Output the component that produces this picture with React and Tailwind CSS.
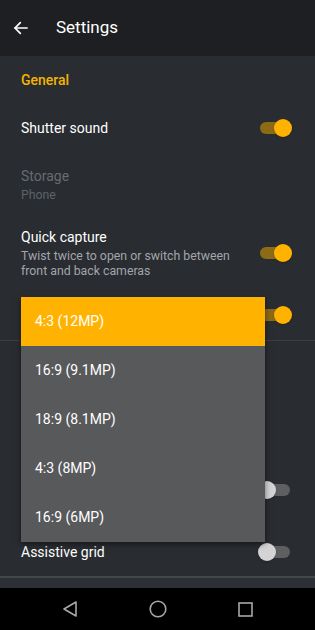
import { useState } from "react"

const font = { fontFamily: "Roboto, 'Liberation Sans', sans-serif" }

function Toggle({ on }) {
  return (
    <div className="relative w-[34px] h-[18px] flex items-center">
      <div className={`ml-[2px] w-[30px] h-[12px] rounded-full ${on ? "bg-[#8c6b16]" : "bg-[#5d5f61]"}`} />
      <div
        className={`absolute top-0 w-[18px] h-[18px] rounded-full shadow ${
          on ? "right-0 bg-[#ffb300]" : "left-0 bg-[#d4d4d4]"
        }`}
      />
    </div>
  )
}

// covered rows sit under the open menu, their labels are not drawn
function Row({ title, subtitle, toggle, disabled, covered, className = "" }) {
  return (
    <div className={`flex items-center justify-between pl-[21px] pr-[23px] ${className}`}>
      <div className={`flex flex-col ${covered ? "invisible" : ""}`}>
        <span className={`text-[14px] leading-[20px] ${disabled ? "text-[#686b70]" : "text-white"}`}>{title}</span>
        {subtitle && (
          <span className={`text-[12.3px] leading-[15px] mt-[2px] ${disabled ? "text-[#5f6267]" : "text-[#a3a6ab]"}`}>
            {subtitle}
          </span>
        )}
      </div>
      {toggle !== undefined && <Toggle on={toggle} />}
    </div>
  )
}

const options = ["4:3 (12MP)", "16:9 (9.1MP)", "18:9 (8.1MP)", "4:3 (8MP)", "16:9 (6MP)"]

export default function App() {
  const [selected, setSelected] = useState(0)

  return (
    <div className="relative w-[315px] h-[630px] flex flex-col bg-[#292c31] overflow-hidden" style={font}>
      <header className="h-[56px] shrink-0 flex items-center bg-[#1d1f23]">
        <svg className="ml-[13px]" width="16" height="16" viewBox="0 0 24 24" fill="none" stroke="white" strokeWidth="2.6" strokeLinecap="round" strokeLinejoin="round">
          <line x1="21" y1="12" x2="3" y2="12" />
          <polyline points="11,4 3,12 11,20" />
        </svg>
        <span className="ml-[27px] text-[17px] text-white">Settings</span>
      </header>

      <div className="flex-1 flex flex-col">
        <div className="h-[48px] flex items-center pl-[21px] text-[14px] font-medium text-[#f5b400]">General</div>
        <Row title="Shutter sound" toggle={true} className="h-[48px]" />
        <Row title="Storage" subtitle="Phone" disabled className="h-[64px]" />
        <Row
          title="Quick capture"
          subtitle={<>Twist twice to open or switch between<br />front and back cameras</>}
          toggle={true}
          className="h-[74px]"
        />
        <Row title="Picture size" toggle={true} covered className="h-[50px]" />
        <div className="h-px bg-[#3c3f44]" />
        <div className="h-[48px] flex items-center pl-[21px] text-[14px] font-medium text-[#f5b400] invisible">Photo</div>
        <Row title="Location" subtitle="Save photo location" covered className="h-[69px]" />
        <Row title="Watermark" subtitle="Add watermark to photos" toggle={false} covered className="h-[64px]" />
        <Row title="Assistive grid" toggle={false} className="h-[48px] mt-[6px]" />
        <div className="h-[2px] bg-[#44474c]" />
        <div className="flex-1 bg-[#2c2f34]" />
      </div>

      <nav className="h-[42px] shrink-0 bg-black flex items-center justify-between pl-[62px] pr-[62px]">
        <svg width="16" height="16" viewBox="0 0 16 16" fill="none" stroke="#a8a8a8" strokeWidth="1.6" strokeLinejoin="round">
          <polygon points="14,1 14,15 2,8" />
        </svg>
        <svg width="18" height="18" viewBox="0 0 18 18" fill="none" stroke="#a8a8a8" strokeWidth="1.6">
          <circle cx="9" cy="9" r="7.8" />
        </svg>
        <svg width="15" height="15" viewBox="0 0 15 15" fill="none" stroke="#a8a8a8" strokeWidth="1.6">
          <rect x="1" y="1" width="13" height="13" />
        </svg>
      </nav>

      <div className="absolute left-[21px] top-[297px] w-[244px] flex flex-col bg-[#58595b] shadow-[0_2px_6px_rgba(0,0,0,0.5)]">
        {options.map((o, i) => (
          <button
            key={o}
            onClick={() => setSelected(i)}
            className={`h-[49px] flex items-center pl-[14px] text-left text-[14px] text-white ${
              selected === i ? "bg-[#ffb300]" : ""
            }`}
          >
            {o}
          </button>
        ))}
      </div>
    </div>
  )
}
